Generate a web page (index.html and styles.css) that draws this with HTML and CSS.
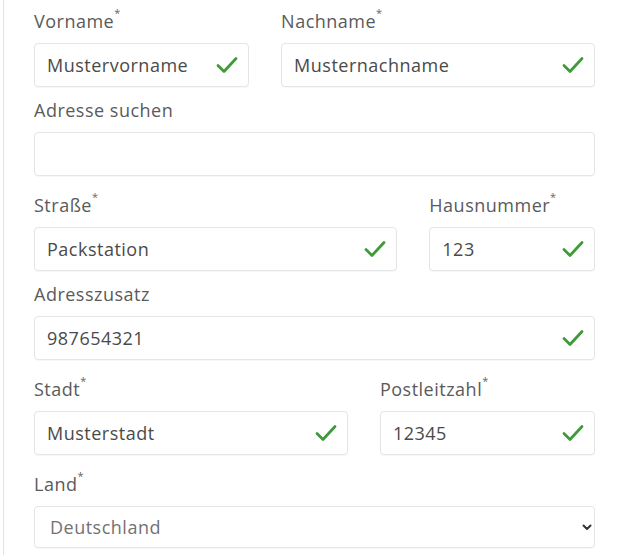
FILE: index.html
```html
<!DOCTYPE html>
<html lang="de">
<head>
<meta charset="utf-8">
<title>Adresse</title>
<link rel="stylesheet" href="styles.css">
</head>
<body>
<div class="page">
  <form class="form">
    <div class="row">
      <div class="field span5">
        <label class="label req">Vorname<sup>*</sup></label>
        <div class="control">
          <input class="input" type="text" value="Mustervorname">
          <svg class="check" viewBox="0 0 22 18" width="22" height="18"><polyline points="2,9.5 8,15.5 20,2.5"/></svg>
        </div>
      </div>
      <div class="field span7">
        <label class="label req">Nachname<sup>*</sup></label>
        <div class="control">
          <input class="input" type="text" value="Musternachname">
          <svg class="check" viewBox="0 0 22 18" width="22" height="18"><polyline points="2,9.5 8,15.5 20,2.5"/></svg>
        </div>
      </div>
    </div>
    <div class="row">
      <div class="field span12">
        <label class="label">Adresse suchen</label>
        <div class="control">
          <input class="input" type="text" value="">
        </div>
      </div>
    </div>
    <div class="row">
      <div class="field span8">
        <label class="label req">Straße<sup>*</sup></label>
        <div class="control">
          <input class="input" type="text" value="Packstation">
          <svg class="check" viewBox="0 0 22 18" width="22" height="18"><polyline points="2,9.5 8,15.5 20,2.5"/></svg>
        </div>
      </div>
      <div class="field span4">
        <label class="label req">Hausnummer<sup>*</sup></label>
        <div class="control">
          <input class="input" type="text" value="123">
          <svg class="check" viewBox="0 0 22 18" width="22" height="18"><polyline points="2,9.5 8,15.5 20,2.5"/></svg>
        </div>
      </div>
    </div>
    <div class="row">
      <div class="field span12">
        <label class="label">Adresszusatz</label>
        <div class="control">
          <input class="input" type="text" value="987654321">
          <svg class="check" viewBox="0 0 22 18" width="22" height="18"><polyline points="2,9.5 8,15.5 20,2.5"/></svg>
        </div>
      </div>
    </div>
    <div class="row">
      <div class="field span7">
        <label class="label req">Stadt<sup>*</sup></label>
        <div class="control">
          <input class="input" type="text" value="Musterstadt">
          <svg class="check" viewBox="0 0 22 18" width="22" height="18"><polyline points="2,9.5 8,15.5 20,2.5"/></svg>
        </div>
      </div>
      <div class="field span5">
        <label class="label req">Postleitzahl<sup>*</sup></label>
        <div class="control">
          <input class="input" type="text" value="12345">
          <svg class="check" viewBox="0 0 22 18" width="22" height="18"><polyline points="2,9.5 8,15.5 20,2.5"/></svg>
        </div>
      </div>
    </div>
    <div class="row">
      <div class="field span12">
        <label class="label req">Land<sup>*</sup></label>
        <div class="control">
          <select class="select">
            <option>Deutschland</option>
          </select>
          <svg class="chevron" viewBox="0 0 10 7" width="10" height="7"><polyline points="1.5,1.5 5,5 8.5,1.5"/></svg>
        </div>
      </div>
    </div>
  </form>
</div>
</body>
</html>
```
FILE: styles.css
```css
html, body {
  margin: 0;
  padding: 0;
  background: #ffffff;
}

body {
  font-family: "Open Sans", "Liberation Sans", sans-serif;
  color: #555555;
}

.page {
  margin-left: 3px;
  border-left: 1px solid #e3e3e3;
  min-height: 555px;
  box-sizing: border-box;
  padding: 2px 0 0 30px;
}

.form {
  width: 561px;
}

.row {
  display: grid;
  grid-template-columns: repeat(12, 1fr);
  column-gap: 32px;
}

.span4 { grid-column: span 4; }
.span5 { grid-column: span 5; }
.span7 { grid-column: span 7; }
.span8 { grid-column: span 8; }
.span12 { grid-column: span 12; }

.field {
  margin-bottom: 10px;
  min-width: 0;
}

.label {
  display: block;
  font-size: 18px;
  line-height: 27px;
  letter-spacing: 0.5px;
  color: #5a5a5a;
  margin-bottom: 8px;
}

.label.req {
  padding-top: 6px;
}

.label sup {
  font-size: 11px;
  line-height: 0;
  vertical-align: 11px;
  margin-left: 0;
  color: #666666;
}

.control {
  position: relative;
}

.input,
.select {
  display: block;
  width: 100%;
  box-sizing: border-box;
  height: 44px;
  margin: 0;
  border: 1px solid #e5e5e5;
  border-radius: 4px;
  background: #ffffff;
  box-shadow: 0 1px 1px rgba(0, 0, 0, 0.03);
  font-family: "Open Sans", "Liberation Sans", sans-serif;
  font-size: 18px;
  letter-spacing: 0.5px;
  color: #4a4a4a;
  padding: 0 40px 0 12px;
  outline: none;
}

.select {
  height: 42px;
  padding-left: 15px;
  color: #727272;
  appearance: none;
  -webkit-appearance: none;
}

.check {
  position: absolute;
  right: 11px;
  top: 13px;
  fill: none;
  stroke: #3e9b38;
  stroke-width: 2.8;
  stroke-linecap: round;
  stroke-linejoin: round;
}

.chevron {
  position: absolute;
  right: 3px;
  top: 18px;
  fill: none;
  stroke: #333333;
  stroke-width: 2;
  stroke-linecap: round;
  stroke-linejoin: round;
}
```
